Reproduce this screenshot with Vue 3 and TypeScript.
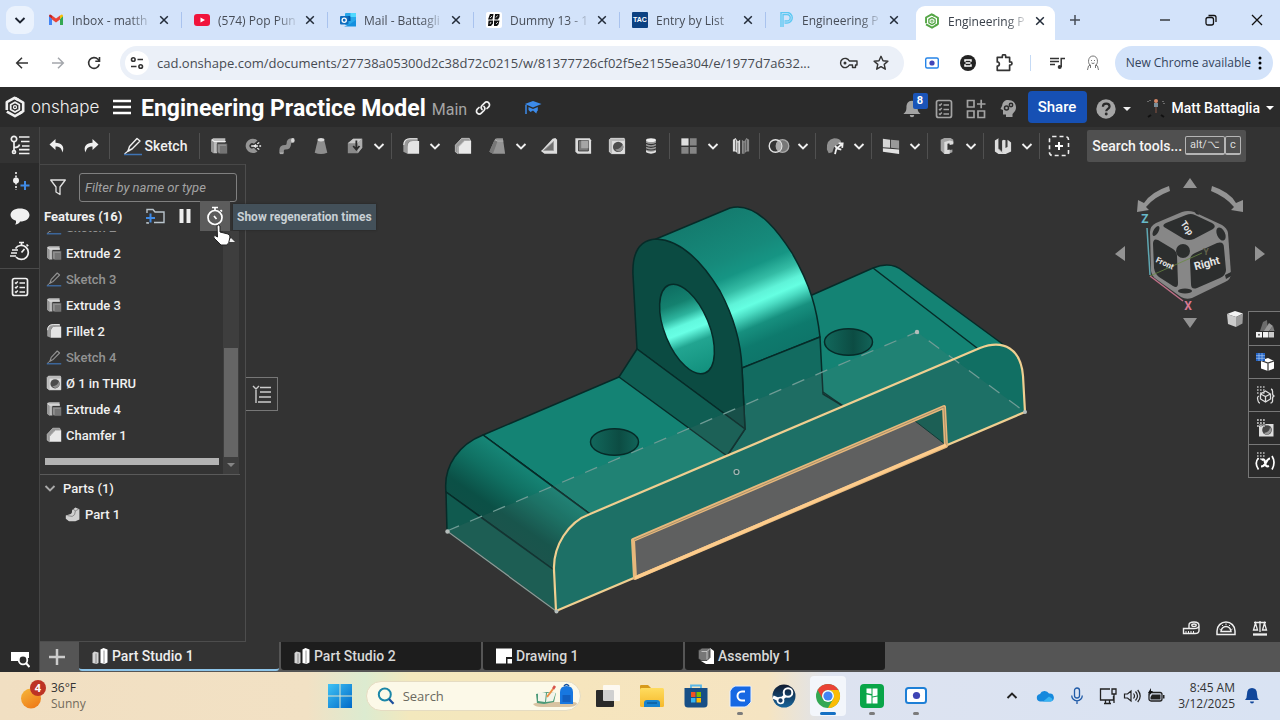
<script setup lang="ts">
import { ref } from 'vue'

interface BrowserTab { title: string; icon: string; active?: boolean }
interface Tool { kind: 'tool' | 'menu' | 'sep'; icon?: string; label?: string }
interface Feature { name: string; icon: string; dim?: boolean }

const browserTabs: BrowserTab[] = [
  { title: 'Inbox - matth', icon: 'gmail' },
  { title: '(574) Pop Pun', icon: 'youtube' },
  { title: 'Mail - Battagli', icon: 'outlook' },
  { title: 'Dummy 13 - 1', icon: 'dummy' },
  { title: 'Entry by List', icon: 'tac' },
  { title: 'Engineering P', icon: 'pearson' },
  { title: 'Engineering P', icon: 'onshape-green', active: true },
]

const t = (icon: string, label: string): Tool => ({ kind: 'tool', icon, label })
const menu = (label: string): Tool => ({ kind: 'menu', label })
const sep: Tool = { kind: 'sep' }
const tools: Tool[] = [
  t('extrude', 'Extrude'), t('revolve', 'Revolve'), t('sweep', 'Sweep'), t('loft', 'Loft'), t('thicken', 'Thicken'), menu('More solids'), sep,
  t('fillet', 'Fillet'), menu('More fillets'), t('chamfer', 'Chamfer'), t('draft', 'Draft'), menu('More drafts'),
  t('rib', 'Rib'), t('shell', 'Shell'), t('hole', 'Hole'), t('thread', 'Thread'), sep,
  t('pattern', 'Pattern'), menu('More patterns'), t('mirror', 'Mirror'), sep,
  t('boolean', 'Boolean'), menu('More booleans'), sep,
  t('transform', 'Transform'), menu('More transforms'), sep,
  t('plane', 'Plane'), menu('More planes'), sep,
  t('frame', 'Frame'), menu('More frames'), sep,
  t('sheet', 'Sheet metal'), menu('More sheet metal'), sep,
  t('addtool', 'Add custom feature'),
]

const features: Feature[] = [
  { name: 'Sketch 2', icon: 'sketch', dim: true },
  { name: 'Extrude 2', icon: 'extrude' },
  { name: 'Sketch 3', icon: 'sketch', dim: true },
  { name: 'Extrude 3', icon: 'extrude' },
  { name: 'Fillet 2', icon: 'fillet' },
  { name: 'Sketch 4', icon: 'sketch', dim: true },
  { name: 'Ø 1 in THRU', icon: 'hole' },
  { name: 'Extrude 4', icon: 'extrude' },
  { name: 'Chamfer 1', icon: 'chamfer' },
]

const docTabs = [
  { name: 'Part Studio 1', icon: 'studio' },
  { name: 'Part Studio 2', icon: 'studio' },
  { name: 'Drawing 1', icon: 'drawing' },
  { name: 'Assembly 1', icon: 'assembly' },
]
const activeDoc = ref(0)

const sidePanels = [
  { icon: 'appearance', label: 'Appearance' },
  { icon: 'gridcube', label: 'Configurations' },
  { icon: 'bracecube', label: 'Custom tables' },
  { icon: 'gridhole', label: 'Hole table' },
  { icon: 'variable', label: 'Variables' },
]

const apps = [
  { icon: 'taskview', label: 'Task view' },
  { icon: 'explorer', label: 'File Explorer' },
  { icon: 'store', label: 'Store' },
  { icon: 'capp', label: 'C app', running: true },
  { icon: 'steam', label: 'Steam' },
  { icon: 'chrome', label: 'Chrome', active: true },
  { icon: 'greenapp', label: 'Panels', running: true },
  { icon: 'recorder', label: 'Recorder', running: true },
]

const url = ref('cad.onshape.com/documents/27738a05300d2c38d72c0215/w/81377726cf02f5e2155ea304/e/1977d7a632...')
const filter = ref('')
const query = ref('')
</script>

<template>
  <div class="screen">
    <svg class="defs" aria-hidden="true">
      <defs>
        <linearGradient id="g-sun" x1="0" y1="0" x2="0.6" y2="1"><stop offset="0" stop-color="#f6b93b" /><stop offset="1" stop-color="#ef7d1a" /></linearGradient>
        <linearGradient id="g-win" x1="0" y1="0" x2="1" y2="1"><stop offset="0" stop-color="#3fc3f5" /><stop offset="1" stop-color="#0069c8" /></linearGradient>
        <linearGradient id="g-folder" x1="0" y1="0" x2="0" y2="1"><stop offset="0" stop-color="#ffdc5f" /><stop offset="1" stop-color="#f5b92c" /></linearGradient>
        <linearGradient id="g-steam" x1="0" y1="0" x2="0" y2="1"><stop offset="0" stop-color="#111b30" /><stop offset="1" stop-color="#16649b" /></linearGradient>
      </defs>
      <symbol id="chev" viewBox="0 0 12 12"><path d="M1.500 4 6 8.500 10.500 4" fill="none" stroke="currentColor" stroke-width="1.900" /></symbol>
      <symbol id="x" viewBox="0 0 12 12"><path d="M2.200 2.200l7.600 7.600M9.800 2.200l-7.600 7.600" fill="none" stroke="currentColor" stroke-width="1.500" /></symbol>
      <symbol id="gmail" viewBox="0 0 16 16"><path d="M1 3.500V13h3V7z" fill="#4285f4" /><path d="M12 7v6h3V3.500z" fill="#34a853" /><path d="M1 4.200 4 7V3.600L2.800 2.700Q1 2 1 4.200" fill="#c5221f" /><path d="M4 3.600 8 6.600l4-3V7.500l-4 3-4-3z" fill="#ea4335" /><path d="M12 3.600 13.200 2.700Q15 2 15 4.200L12 7z" fill="#fbbc04" /></symbol>
      <symbol id="youtube" viewBox="0 0 16 16"><rect y="2" width="16" height="12" rx="3" fill="#f0143c" /><path d="m6.500 5.400 4.500 2.600-4.500 2.600z" fill="#fff" /></symbol>
      <symbol id="outlook" viewBox="0 0 16 16"><rect x="5" y="1" width="11" height="12" rx="1" fill="#28a8ea" /><path d="M5 4h5.500v5H5z" fill="#0358a7" /><path d="M10.500 1H16v4h-5.500z" fill="#50d9ff" /><path d="M4 14.500h12V8l-6 4z" fill="#1490df" /><rect y="4" width="8.500" height="8.500" rx="1" fill="#0f6cbd" /><circle cx="4.200" cy="8.200" r="2.100" fill="none" stroke="#fff" stroke-width="1.300" /></symbol>
      <symbol id="dummy" viewBox="0 0 16 16"><rect width="16" height="16" rx="2" fill="#fff" /><path d="M4 2h3.500L6.500 7.500H2zM9 2h4.500v3L12 7.500H8.500zM2.500 8.500h4.500v3L5 14H2zM8 8.500h5.500l-1 4L11 14H8z" fill="#111" /><path d="M6 4 4 6M11.500 3.500l-1.500 2M5 10l-1 2M12 10l-2 2" stroke="#fff" stroke-width=".8" /></symbol>
      <symbol id="pearson" viewBox="0 0 16 16"><path d="M4 15V1.500h5a4.200 4.200 0 0 1 0 8.500H6.500" fill="none" stroke="#5cc8f2" stroke-width="3.400" /><path d="M4 15V1.500h5a4.200 4.200 0 0 1 0 8.500H6.500" fill="none" stroke="#d3e3fa" stroke-width=".7" /></symbol>
      <symbol id="onshape-mark" viewBox="0 0 20 22"><g fill="none" stroke="currentColor" stroke-width="2.600" stroke-linejoin="round"><path d="M1.800 14V6.200L9.500 1.800l4 2.200" /><path d="M10 2l8.200 4.600v8.600l-3.700 2.200" /><path d="M17 16.200 10 20.200 1.800 15.600" /><path d="M10 6.300l4.300 2.400v4.800L10 16l-4.300-2.500V8.700z" stroke-width="1.800" /><circle cx="10" cy="11.200" r="1.500" stroke-width="1.300" /></g></symbol>
      <symbol id="back" viewBox="0 0 16 16"><path d="M14 8H3M8 2.700 2.700 8 8 13.300" fill="none" stroke="currentColor" stroke-width="1.500" /></symbol>
      <symbol id="forward" viewBox="0 0 16 16"><path d="M2 8h11M8 2.700 13.300 8 8 13.300" fill="none" stroke="currentColor" stroke-width="1.500" /></symbol>
      <symbol id="reload" viewBox="0 0 16 16"><path d="M13.300 9.300A5.400 5.400 0 1 1 12 4.300l1.300 1.300M13.500 2v4.200H9.300" fill="none" stroke="currentColor" stroke-width="1.600" /></symbol>
      <symbol id="tune" viewBox="0 0 16 16"><g fill="none" stroke="currentColor" stroke-width="1.600"><circle cx="4.300" cy="4.500" r="1.800" /><path d="M8.500 4.500H14M2 11.500h5.500" /><circle cx="11.700" cy="11.500" r="1.800" /></g></symbol>
      <symbol id="key" viewBox="0 0 20 16"><g fill="none" stroke="currentColor" stroke-width="1.400"><path d="M10.300 6H18v4h-1.500v2.500h-3V10h-3.200A4.600 4.600 0 1 1 10.300 6z" stroke-linejoin="round" /></g><circle cx="6" cy="8" r="1.500" fill="currentColor" /></symbol>
      <symbol id="star" viewBox="0 0 16 16"><path d="M8 1.300l2 4.500 4.900.4-3.700 3.200 1.100 4.800L8 11.600l-4.300 2.600 1.100-4.800L1.100 6.200 6 5.800z" fill="none" stroke="currentColor" stroke-width="1.400" stroke-linejoin="round" /></symbol>
      <symbol id="recorder-small" viewBox="0 0 16 16"><rect x="1.700" y="3" width="12.600" height="10" rx="1.500" fill="#fff" stroke="#2684e8" stroke-width="1.400" /><circle cx="8" cy="8" r="2.600" fill="#4146b8" /></symbol>
      <symbol id="blackext" viewBox="0 0 16 16"><circle cx="8" cy="8" r="8" fill="#222" /><path d="M5 6.700V5h6v1.700M5 9.300V11h6V9.300M5.500 8h5" fill="none" stroke="#fff" stroke-width="1.500" /></symbol>
      <symbol id="puzzle" viewBox="0 0 16 16"><path d="M2 3h4.500V2a1.500 1.500 0 0 1 3 0v1H13v4h.700a1.400 1.400 0 0 1 0 2.800H13V14.500H2v-3.700c2.500 0 2.500-3.800 0-3.800z" fill="none" stroke="currentColor" stroke-width="1.500" stroke-linejoin="round" /></symbol>
      <symbol id="playlist" viewBox="0 0 16 16"><path d="M1 3.500h9M1 6.500h9M1 9.500h5" stroke="currentColor" stroke-width="1.500" /><path d="M12.200 12V3.500H16" fill="none" stroke="currentColor" stroke-width="1.500" /><circle cx="10.700" cy="12" r="2" fill="currentColor" /></symbol>
      <symbol id="ghost" viewBox="0 0 16 18"><g fill="none" stroke="#777" stroke-width="1"><path d="M5 11C2.500 9 3 2 8 2s5.500 7 3 9M2.500 16l1-4 2-1v3M13.500 16l-1-4-2-1v3" /><path d="M6 6.500h1M9 6.500h1M6.500 9q1.500 1 3 0" /></g></symbol>
      <symbol id="link" viewBox="0 0 16 16"><g fill="none" stroke="currentColor" stroke-width="1.700" stroke-linecap="round"><path d="M7 9.500a3 3 0 0 1 0-4l2.700-2.700a2.700 2.700 0 0 1 4 4L12 8.500" /><path d="M9 6.500a3 3 0 0 1 0 4l-2.700 2.700a2.700 2.700 0 0 1-4-4L4 7.500" /></g></symbol>
      <symbol id="gradcap" viewBox="0 0 18 18"><path d="M9 2l8.500 3L9 8.500.8 5z" fill="#3c8bea" /><path d="M4.500 8 9 10l4.800-2v3.500q-1 .5-1.500 3L9 11.500 6.500 13 4.500 11z" fill="#3c8bea" /><path d="M2 6v9" stroke="#3c8bea" stroke-width="1.500" /></symbol>
      <symbol id="bell" viewBox="0 0 18 18"><path d="M9 1.500c3.700 0 5 2.800 5 6 0 3.500 1 4.500 2.700 6H1.300C3 12 4 11 4 7.500c0-3.200 1.300-6 5-6M7 14.500h4a2 2 0 0 1-4 0" fill="currentColor" /></symbol>
      <symbol id="checklist" viewBox="0 0 18 20"><rect x="1.500" y="1.500" width="15" height="17" rx="2" fill="none" stroke="currentColor" stroke-width="1.700" /><path d="M4 5.500l1 1 1.800-2M4 10l1 1 1.800-2M4 14.500l1 1 1.800-2M8.500 6H14M8.500 10.500H14M8.500 15H14" fill="none" stroke="currentColor" stroke-width="1.400" /></symbol>
      <symbol id="appgrid" viewBox="0 0 20 20"><path d="M1.500 1.500h6.500v6.500h-6.500zM1.500 12h6.500v6.500h-6.500zM12 12h6.500v6.500h-6.500zM15.200.7v8.500M11 5h8.500" fill="none" stroke="currentColor" stroke-width="1.700" /></symbol>
      <symbol id="head" viewBox="0 0 18 20"><path d="M9 1c5 0 8 3 8 7.500 0 4-3 5-3.500 7V18H7v-2.500H4V11L1.500 10 3.200 6.500C3.500 3 6 1 9 1" fill="currentColor" /><g fill="none" stroke="#2b2b2b" stroke-width="1.500"><circle cx="7.500" cy="9" r="2" /><circle cx="12" cy="6" r="1.700" /></g></symbol>
      <symbol id="question" viewBox="0 0 18 18"><circle cx="9" cy="9" r="8.700" fill="#a5a5a5" /><path d="M6.200 7c0-4 6-3.700 6-.3 0 2-3 2.200-3 4.300" fill="none" stroke="#2b2b2b" stroke-width="2" /><circle cx="9.200" cy="13.500" r="1.300" fill="#2b2b2b" /></symbol>
      <symbol id="caret" viewBox="0 0 8 6"><path d="M0 1h8L4 5z" fill="currentColor" /></symbol>
      <symbol id="avatar" viewBox="0 0 20 20"><path d="M2 3v1M4 2v1M17 3v1M18 5v1" stroke="#aaa" stroke-width="1" /><circle cx="10" cy="3" r="2" fill="#d98a68" /><path d="M8 5h4v4H8z" fill="#7b8e9a" /><path d="M9 9h2v6H9z" fill="#5a4038" /><path d="M2 19l3-2M15 17l3 2" stroke="#111" stroke-width="2" /></symbol>
      <symbol id="undo" viewBox="0 0 18 16"><path d="M7.500 1 1.500 6.500l6 5.500V8.500c4 0 6 1.500 7 6 2.500-6-1-9.500-7-9.700z" fill="currentColor" /></symbol>
      <symbol id="redo" viewBox="0 0 18 16"><path d="M10.500 1l6 5.500-6 5.500V8.500c-4 0-6 1.500-7 6-2.500-6 1-9.500 7-9.700z" fill="currentColor" /></symbol>
      <symbol id="sketch" viewBox="0 0 20 20"><path d="M5 15l1.500-4.500L14 2.500l3 2.500-8 8z" fill="none" stroke="currentColor" stroke-width="1.400" stroke-linejoin="round" /><path d="M1.500 18 5 15l2-.5" fill="none" stroke="currentColor" stroke-width="1.200" /><path d="M1 18.500h18" stroke="#3f74b5" stroke-width="1.500" /></symbol>
      <symbol id="extrude" viewBox="0 0 20 20"><path d="M1.500 3 3.500 1.500H17V6H8v12H4l-2.500-2z" fill="#bdbdbd" /><path d="M1.500 3 4.500 5v13l-3-2z" fill="#959595" /><path d="M2 3 4.500 5H17.500" fill="none" stroke="#f0f0f0" stroke-width="1.200" /><path d="M8 7.500h11V18.500H10l-2-2z" fill="#8e8e8e" stroke="#444" stroke-width=".8" /><path d="M11 10H18.500v8H11z" fill="#747474" /></symbol>
      <symbol id="revolve" viewBox="0 0 20 20"><path d="M13 2.500A8 8 0 1 0 15 16l-4-4a3 3 0 1 1 0-4.500l4-3.500z" fill="#959595" /><path d="M8 10h11M11 10l6-4M11 10l6 4" stroke="#eee" stroke-width="1.400" stroke-dasharray="3 1.500" /></symbol>
      <symbol id="sweep" viewBox="0 0 20 20"><path d="M4 18v-3q0-3.500 4-3.500t4-4Q12 4 16 4" fill="none" stroke="#8c8c8c" stroke-width="5" /><ellipse cx="16.500" cy="3.800" rx="2" ry="2.600" fill="#d7d7d7" /><path d="M2 18h4" stroke="#aaa" stroke-width="2" /></symbol>
      <symbol id="loft" viewBox="0 0 20 20"><path d="M6.500 3h7l3.500 14.500q-7 3-14 0z" fill="#8e8e8e" /><ellipse cx="10" cy="3" rx="3.800" ry="1.900" fill="#d9d9d9" /></symbol>
      <symbol id="thicken" viewBox="0 0 20 20"><path d="M2 7l6-5h10v10l-5 6H2z" fill="#8a8a8a" /><path d="M2 7l6-5h10l-5 5z" fill="#c8c8c8" /><path d="M13 7l5-5v10l-5 6z" fill="#adadad" /><path d="M11.500 4v9M8 10l3.500 4 3.500-4" fill="none" stroke="#2a2a2a" stroke-width="2" /></symbol>
      <symbol id="fillet" viewBox="0 0 20 20"><path d="M1.500 9q0-7.500 7.500-7.500h8.500v3H11Q6 5 6 10v8.500l-4.500-2z" fill="#999" /><path d="M2 9q0-7 7-7H17" fill="none" stroke="#eee" stroke-width="1.200" /><path d="M6 11q0-6.500 6-6.500h7v14H6z" fill="#e4e4e4" /></symbol>
      <symbol id="chamfer" viewBox="0 0 20 20"><path d="M1.500 9 8.500 1.500H17l1.500 3H11L4.500 11v7.500l-3-2z" fill="#999" stroke="#ddd" stroke-width=".7" /><path d="M5 11l6.500-6.500H19v14H5z" fill="#e9e9e9" /></symbol>
      <symbol id="draft" viewBox="0 0 20 20"><path d="M7 4q1-2.500 3-2.500h6.500L19 18.500H5.500l-4-2z" fill="#949494" /><path d="M7 4 1.500 16.500l4 2L10.500 5z" fill="#777" /><path d="M8 3l2.500 1.500H17" fill="none" stroke="#b5b5b5" stroke-width="1" /></symbol>
      <symbol id="rib" viewBox="0 0 20 20"><path d="M14 2l3-1 2 2v15.500H5L1 15.500 3 14z" fill="#ddd" /><path d="M4 15 15 5v10z" fill="#707070" stroke="#999" stroke-width="1" /></symbol>
      <symbol id="shell" viewBox="0 0 20 20"><path d="M1.500 1.500h16l1.500 2v15H4l-2.500-2z" fill="#dcdcdc" /><path d="M5 4h11v11.500H5z" fill="#777" stroke="#3c3c3c" stroke-width="1" /><path d="M8 4h8v8.500H8z" fill="#a5a5a5" /></symbol>
      <symbol id="hole" viewBox="0 0 20 20"><path d="M1.500 3 3 1.500h15L18.500 3v15.500H4l-2.500-2z" fill="#b9b9b9" stroke="#eee" stroke-width=".8" /><path d="M4.500 4.500h14v14h-14z" fill="#dedede" /><circle cx="11.300" cy="11" r="5.800" fill="#4c4c4c" /><path d="M8 14a5 5 0 0 0 8-6q-1 5-8 6" fill="#8f8f8f" /></symbol>
      <symbol id="thread" viewBox="0 0 20 20"><path d="M4.500 3.500v13q5.500 3 11 0v-13z" fill="#9a9a9a" /><ellipse cx="10" cy="3.500" rx="5.500" ry="2" fill="#eee" /><path d="M4 7q6 3 12 0M4 10q6 3 12 0M4 13q6 3 12 0" fill="none" stroke="#333" stroke-width="1.200" /><path d="M4.500 15q5.500 3 11 0v2q-5.500 3-11 0z" fill="#e2e2e2" /></symbol>
      <symbol id="pattern" viewBox="0 0 20 20"><path d="M1.500 1.500h8v8h-8z" fill="#e0e0e0" /><path d="M11 1.500h7.500v8H11zM1.500 11h8v7.500h-8zM11 11h7.500v7.500H11z" fill="#858585" /></symbol>
      <symbol id="mirror" viewBox="0 0 20 20"><path d="M1 3l3-2 2.500 4L9 3v15.500H6.500L4 16H1z" fill="#dedede" /><path d="M19 3l-3-2-2.500 4L11 3v15.500h2.500L16 16h3z" fill="#8b8b8b" /><path d="M4 3v12M6.500 6v12M16 3v12M13.500 6v12" stroke="#444" stroke-width=".8" /></symbol>
      <symbol id="boolean" viewBox="0 0 22 20"><circle cx="14.500" cy="10" r="6.300" fill="#777" stroke="#aaa" stroke-width="1.300" /><circle cx="7.500" cy="10" r="6.300" fill="none" stroke="#e2e2e2" stroke-width="1.400" /><path d="M11 5a6.300 6.300 0 0 1 0 10 6.300 6.300 0 0 1 0-10" fill="#aaa" /></symbol>
      <symbol id="transform" viewBox="0 0 20 20"><path d="M1 14Q0 3 9 1.500q7 0 8 4.500L9 11l-2 6-4 1z" fill="#8f8f8f" /><path d="M10 19l1.500-6 6-5M10 10l3 3 4 1M14 7l4.500 0L18 12" fill="none" stroke="#f0f0f0" stroke-width="2" /></symbol>
      <symbol id="plane" viewBox="0 0 20 20"><path d="M1 2l8 1v9l-8-.5z" fill="#d5d5d5" /><path d="M10 3l9 1v9l-9-1z" fill="#999" /><path d="M1 12.500l18 1.500v5L1 16.500z" fill="#e2e2e2" /></symbol>
      <symbol id="frame" viewBox="0 0 20 20"><path d="M3 3l4-2h7l3 2v4l-4 1-1-2-2 1v8l6-1v3l-5 2H7l-4-4z" fill="#a5a5a5" /><path d="M7 5.500 13 4l4 1v3l-4 1v-2l-2.500.5v7l2.500-.5v4.500L7 19z" fill="#dcdcdc" /></symbol>
      <symbol id="sheet" viewBox="0 0 20 20"><path d="M1 4l4-2.500v11L9 16V4l2-1 2 1v8l2-1V3l4 3v10l-6 3H5l-4-3z" fill="#dcdcdc" /><path d="M5 2v11l4 4M13 4v8" fill="none" stroke="#777" stroke-width="1" /></symbol>
      <symbol id="addtool" viewBox="0 0 22 22"><rect x="1.500" y="1.500" width="19" height="19" rx="3" fill="none" stroke="#eee" stroke-width="1.600" stroke-dasharray="4 3" /><path d="M11 7v8M7 11h8" stroke="#fff" stroke-width="2" /></symbol>
      <symbol id="tree" viewBox="0 0 20 20"><g fill="none" stroke="currentColor" stroke-width="1.700"><circle cx="4" cy="4" r="2.700" /><path d="M4 7v9.500M4 12.500q5 0 5.500-3" /><circle cx="4" cy="17" r="1.500" /><path d="M9 2h10.500M11 6.500h8.500M12 11h7.500M9 14.700h10.500M9 18.500h10.500" /></g></symbol>
      <symbol id="addnode" viewBox="0 0 20 20"><path d="M6 1v18" stroke="currentColor" stroke-width="1.600" stroke-dasharray="2 1.500" /><circle cx="6" cy="9.500" r="3" fill="currentColor" /><path d="M15 10v9M10.500 14.500h9" stroke="#3f8ae5" stroke-width="2" /></symbol>
      <symbol id="comment" viewBox="0 0 20 20"><path d="M10 2.500c5.500 0 9.500 2.700 9.500 6.500s-4 6.500-9.500 6.500q-1 2.500-5 3 1.500-1.500 1-3.700C2.500 13.700.5 11.500.5 9 .5 5.200 4.500 2.500 10 2.500" fill="currentColor" /></symbol>
      <symbol id="speed" viewBox="0 0 20 20"><g fill="none" stroke="currentColor" stroke-width="1.700"><path d="M5.500 7.500A7 7 0 1 1 6 16M9 1.500h5M11.500 2v3M16.500 3.500l1.700 1.700M11.500 11.500l3-3.500M2 9h6M1 12h6M0 15h6" /></g></symbol>
      <symbol id="stopwatch" viewBox="0 0 20 20"><g fill="none" stroke="#fff" stroke-width="1.700"><circle cx="10" cy="11.500" r="7" /><path d="M7 1.500h6M10 2v3M15.500 4l1.500 1.500M9 10l2.500 3" /></g></symbol>
      <symbol id="tabsearch" viewBox="0 0 20 20"><path d="M1 3h18v6h-2a5 5 0 0 0-9 3L1 12z" fill="#fff" /><circle cx="13" cy="11" r="4.300" fill="#2b2b2b" stroke="#fff" stroke-width="1.800" /><path d="M16 14l3.500 4" stroke="#fff" stroke-width="2" /></symbol>
      <symbol id="funnel" viewBox="0 0 18 18"><path d="M1.700 2h14.600L11 9v7.500L7 14V9z" fill="none" stroke="#e2e2e2" stroke-width="1.300" stroke-linejoin="round" /></symbol>
      <symbol id="addfolder" viewBox="0 0 20 18"><path d="M2 6V2.500h6L10 5h9v10.500H9M2 15v1h2" fill="none" stroke="#b9c4cc" stroke-width="1.400" /><path d="M5.500 6.500v9M1 11h9" stroke="#3f8ae5" stroke-width="2" /></symbol>
      <symbol id="part" viewBox="0 0 20 20"><path d="M1 12l6-2q2-1 2-5l4-3 5 2v13l-5 2H5l-4-3z" fill="#cfcfcf" /><path d="M10 4l3 2q0 6-4 7l-6-1M13 6l4-2" fill="none" stroke="#777" stroke-width="1" /></symbol>
      <symbol id="listtoggle" viewBox="0 0 20 20"><path d="M1 2l3 3 3-3M4 6v13M8 3.500h11M8 8h11M7 13h12M6 18h13" fill="none" stroke="#ccc" stroke-width="1.400" /></symbol>
      <symbol id="studio" viewBox="0 0 18 18"><path d="M1.500 6l2-1.500 4 1V16l-2 1-4-1z" fill="#d5d5d5" /><path d="M9.500 2.500l3-1.500 4 1.500v13l-3 1.500-4-1z" fill="#fff" /><path d="M5 6.500v10M13 3.500v13" stroke="#777" stroke-width=".8" /></symbol>
      <symbol id="drawing" viewBox="0 0 18 18"><path d="M1 1.500h16v8.500h-6v6.500H1z" fill="#fff" /><path d="M12.500 12H17v4.500h-4.500z" fill="#fff" /></symbol>
      <symbol id="assembly" viewBox="0 0 18 18"><path d="M5 1h8l4 3v13H9l-5-3z" fill="#fff" /><path d="M1.500 3.500l3-2H13v9l-3 3H4l-2.500-2z" fill="#777" stroke="#333" stroke-width=".8" /><path d="M4.500 4.500H10v8M10 4.500l3-3" fill="none" stroke="#ddd" stroke-width=".7" /></symbol>
      <symbol id="appearance" viewBox="0 0 20 20"><path d="M5 12l3-9 4-2 1 11z" fill="#6c6c6c" /><path d="M9 12l5-8 4 3-4 5z" fill="#999" /><path d="M14 12l4-5 1.500 5z" fill="#7d7d7d" /><path d="M1 13h6v5.500H1zM8 13h5v5.500H8z" fill="#f2f2f2" /><path d="M13.500 13H19v5.500h-5.500z" fill="#ccc" /><circle cx="4" cy="15.700" r="1" fill="#555" /></symbol>
      <symbol id="gridcube" viewBox="0 0 20 20"><path d="M6 8.500l7-2.500 6 3v7.500L13 19l-7-2.500z" fill="#fff" /><path d="M6 8.500l7 2.500 6-2M13 11v8" fill="none" stroke="#333" stroke-width="1.200" /><path d="M1 1h9v8H1z" fill="#2363c4" /><path d="M4 1v8M7 1v8M1 3.700h9M1 6.300h9" stroke="#a7c5f0" stroke-width=".7" /></symbol>
      <symbol id="bracecube" viewBox="0 0 20 20"><path d="M2 2h8M2 5h8M2 8h8" stroke="#bbb" stroke-width="1.600" stroke-dasharray="1.600 1.400" /><path d="M5.500 9l5-3 5 3v5l-5 3-5-3zM5.500 9l5 2.500 5-2.500M10.500 11.500V17M4 11q-1.500.5-1.500 2 .5 5 2.500 5M16 4q2 .5 1.500 4 0 3 2 3-2 0-2 3 .500 4-2 4" fill="none" stroke="#ddd" stroke-width="1.300" /></symbol>
      <symbol id="gridhole" viewBox="0 0 20 20"><path d="M4 6h14.500v12.500H4z" fill="#ddd" /><circle cx="12" cy="12" r="4.800" fill="#444" /><path d="M9 15q6-1 6-6 3 4-1 7-3 1.500-5-1" fill="#999" /><path d="M1.500 1h9v7h-9z" fill="#2b2b2b" fill-opacity=".6" /><path d="M2 2h8M2 5h8M2 8h8" stroke="#aaa" stroke-width="1.800" stroke-dasharray="1.800 1.200" /></symbol>
      <symbol id="variable" viewBox="0 0 20 20"><path d="M2 2h8M2 5h8M2 8h6" stroke="#bbb" stroke-width="1.600" stroke-dasharray="1.600 1.400" /><path d="M3.500 7Q-1 12 3.500 18.500M17 5q4 6.500 0 13.500" fill="none" stroke="#fff" stroke-width="1.700" /><path d="M6.500 9q3-2 3.500 2.500.5 5 4 3.500M15 7.500q-2 0-4 4t-5 4" fill="none" stroke="#fff" stroke-width="2.200" /></symbol>
      <symbol id="cube" viewBox="0 0 16 16"><path d="M0 3l8-3 8 2.500-7 3.500z" fill="#f4f4f4" /><path d="M0 3l9 3v10L1 13z" fill="#ccc" /><path d="M9 6l7-3.500-.500 10L9 16z" fill="#9c9c9c" /></symbol>
      <symbol id="tape" viewBox="0 0 18 16"><g fill="none" stroke="#eee" stroke-width="1.400"><path d="M1.500 8.500H12q5 0 5-3v5q0 3-4 3H1.500zM7 8V5q0-3 5-3t5 3.500" /><ellipse cx="12" cy="5.200" rx="2.200" ry="1.200" /><path d="M4 11v2M6.500 11v2M9 11v2M11.500 11v2" stroke-width="1" /></g></symbol>
      <symbol id="protractor" viewBox="0 0 20 16"><g fill="none" stroke="#eee" stroke-width="1.500"><path d="M1 14.500V11a9 9 0 0 1 18 0v3.500z" /><path d="M5 11.500a5 5 0 0 1 10 0z" /><path d="M3.500 9l1 .5M6 5l1 1M10 3.500V5M14 5l-1 1M16.500 9l-1 .5" stroke-width="1" /></g></symbol>
      <symbol id="scales" viewBox="0 0 16 16"><g fill="none" stroke="#eee" stroke-width="1.300"><path d="M2 2.500h12M8 1v11M3.500 3l-2 7h4zM12.500 3l-2 7h4z" /><path d="M1 14.500h14" stroke-width="2.300" /></g></symbol>
      <symbol id="weather" viewBox="0 0 26 28"><circle cx="12" cy="17.500" r="10" fill="url(#g-sun)" /></symbol>
      <symbol id="windows" viewBox="0 0 24 24"><path d="M0 0h11.500v11.500H0zM12.500 0H24v11.500H12.500zM0 12.500h11.500V24H0zM12.500 12.500H24V24H12.500z" fill="url(#g-win)" /></symbol>
      <symbol id="searchring" viewBox="0 0 18 18"><circle cx="7.800" cy="7.500" r="6" fill="none" stroke="#1b87a8" stroke-width="2" /><path d="M12 12l4.500 4.800" stroke="#1c4f9c" stroke-width="2.200" /></symbol>
      <symbol id="school" viewBox="0 0 46 26"><path d="M1 21q3-2 12-2h28q4 0 4 2-2 3-8 3H9q-6 0-8-3" fill="#d8c3a2" /><path d="M4 11l11-2 9 1-2 9-10 2-7-1z" fill="#4b9a78" /><path d="M6 9l8 1-1 9-7-1zM15 10l9-1-3 9-7 1z" fill="#f3f5ea" /><path d="M15 14 21 6" stroke="#ed9145" stroke-width="2" /><path d="M21 6l2-3" stroke="#d6534a" stroke-width="2.500" /><path d="M28 9q0-6 6.500-6T41 9v12H28z" fill="#1777e0" /><path d="M30.500 12h8v7h-8z" fill="#125fc0" /><path d="M32 3q2.500-3 5 0" fill="none" stroke="#124f9e" stroke-width="1.500" /></symbol>
      <symbol id="taskview" viewBox="0 0 26 26"><rect x="1" y="7" width="18" height="17" rx="1" fill="#2a2a2a" /><rect x="8" y="2" width="17" height="16" rx="1" fill="#fff" opacity=".78" /></symbol>
      <symbol id="explorer" viewBox="0 0 26 26"><path d="M1 3q0-1 1-1h7l3 3v6H1z" fill="#d79a1c" /><rect x="1" y="5" width="24" height="19" rx="1.500" fill="url(#g-folder)" /><path d="M5 24v-4q0-3 3-3h10q3 0 3 3v4z" fill="#1783cf" /><path d="M8 20h10" stroke="#0c5c9e" stroke-width="1.500" /></symbol>
      <symbol id="store" viewBox="0 0 26 26"><path d="M8 5V2.500h10V5" fill="none" stroke="#59b7e8" stroke-width="1.800" /><path d="M1.500 5h23v16q0 3.500-3.500 3.500H5Q1.500 24.500 1.500 21z" fill="#174f86" /><path d="M8 9h4.500v5H8z" fill="#f25022" /><path d="M13.500 9H18v5h-4.500z" fill="#7fba00" /><path d="M8 15h4.500v4.500H8z" fill="#35b5f0" /><path d="M13.500 15H18v4.500h-4.500z" fill="#ffb900" /></symbol>
      <symbol id="capp" viewBox="0 0 26 26"><path d="M8 3h15q1 0 1 1v15q-4 5-6 5H4q-1 0-1-1V8q2-4 5-5" fill="#1668e3" stroke="#e8f1ff" stroke-width="1" /><path d="M18 8.500h-3a4.500 4.500 0 0 0 0 9h3" fill="none" stroke="#fff" stroke-width="2" /></symbol>
      <symbol id="steam" viewBox="0 0 26 26"><circle cx="13" cy="13" r="11.500" fill="url(#g-steam)" /><circle cx="17" cy="9.500" r="4.300" fill="none" stroke="#fff" stroke-width="2" /><path d="M2 14l7 3 5-4" fill="none" stroke="#fff" stroke-width="3.500" /><circle cx="9.500" cy="17.500" r="3" fill="#1a3c63" stroke="#fff" stroke-width="1.700" /></symbol>
      <symbol id="chrome" viewBox="0 0 26 26"><circle cx="13" cy="13" r="12" fill="#34a853" /><path d="M13 1a12 12 0 0 1 10.400 6H13a6 6 0 0 0-5.200 9L2.600 7A12 12 0 0 1 13 1" fill="#ea4335" /><path d="M23.400 7A12 12 0 0 1 13 25l5.200-9A6 6 0 0 0 13 7z" fill="#fbbc04" /><circle cx="13" cy="13" r="6" fill="#fff" /><circle cx="13" cy="13" r="4.600" fill="#4285f4" /></symbol>
      <symbol id="greenapp" viewBox="0 0 26 26"><rect x="1" y="1" width="24" height="24" rx="4" fill="#09a548" /><path d="M7.500 5.500h5v5.500l-5-1zM7.500 11.500l5 1v8h-5zM13.500 5.500h5v7l-5 1zM13.500 14.500l5-1v7h-5z" fill="#fff" /></symbol>
      <symbol id="recorder" viewBox="0 0 26 26"><rect x="3" y="5" width="20" height="15" rx="2.500" fill="#fff" stroke="#1d7fd6" stroke-width="2" /><circle cx="13.500" cy="12.500" r="3.600" fill="#3e44b5" /></symbol>
      <symbol id="cloud" viewBox="0 0 18 14"><path d="M4 12.500A3.800 3.800 0 0 1 4 5a5 5 0 0 1 9-.5 4 4 0 0 1 1.500 8z" fill="#1689dd" /><path d="M7 12.500l6-5 3 2q1.500 2.500-1.500 3z" fill="#39b4f2" /></symbol>
      <symbol id="mic" viewBox="0 0 14 18"><rect x="4.500" y="1" width="5" height="10" rx="2.500" fill="none" stroke="#205ba8" stroke-width="1.300" /><path d="M1.700 8.500a5.300 5.300 0 0 0 10.600 0M7 14v3" fill="none" stroke="#205ba8" stroke-width="1.300" /></symbol>
      <symbol id="monitor" viewBox="0 0 18 18"><path d="M11 2H1.500v11h13V9M5 16.500h7M6.500 13v3M10.500 13v3M13 2h4v5h-4zM15 7v9" fill="none" stroke="#222" stroke-width="1.300" /></symbol>
      <symbol id="volume" viewBox="0 0 18 16"><path d="M1.500 6h3L8 3v10l-3.500-3h-3zM10.500 5.500q2 2.500 0 5M12.500 3.500q4 4.500 0 9M14.700 2q5 6 0 12" fill="none" stroke="#222" stroke-width="1.200" /></symbol>
      <symbol id="battery" viewBox="0 0 18 16"><rect x="2" y="4.500" width="13" height="8.500" rx="2" fill="none" stroke="#222" stroke-width="1.300" /><path d="M5 6.500h8.500v5H3.500V9zM16 7v3.500h1.500V7z" fill="#222" /><path d="M4 0 1 5h2L2 8l4-5H4z" fill="#111" /></symbol>
      <symbol id="bluebell" viewBox="0 0 14 18"><path d="M7 1q5 0 5 6 0 4 2 6H0q2-2 2-6 0-6 5-6M5 14.500h4a2 2 0 0 1-4 0" fill="#11479b" /></symbol>
    </svg>

    <header class="strip">
      <button class="tablist" aria-label="Search tabs"><svg class="s12"><use href="#chev" /></svg></button>
      <div v-for="(tab, i) in browserTabs" :key="i" class="tab" :class="{ on: tab.active }">
        <svg v-if="tab.icon === 'onshape-green'" class="s16 green"><use href="#onshape-mark" /></svg>
        <span v-else-if="tab.icon === 'tac'" class="tac">TAC</span>
        <svg v-else class="s16"><use :href="'#' + tab.icon" /></svg>
        <span class="tab-title">{{ tab.title }}</span>
        <button class="tab-close" aria-label="Close tab"><svg class="s12"><use href="#x" /></svg></button>
      </div>
      <button class="newtab" aria-label="New tab"><svg class="s12" viewBox="0 0 12 12"><path d="M6 1v10M1 6h10" stroke="currentColor" stroke-width="1.500" /></svg></button>
      <div class="winctl">
        <button aria-label="Minimize"><svg class="s12" viewBox="0 0 12 12"><path d="M1 6h10" stroke="#111" stroke-width="1.200" /></svg></button>
        <button aria-label="Restore"><svg class="s12" viewBox="0 0 12 12"><path d="M3.500 1.500H9a2 2 0 0 1 2 2V8M1 5.500q0-2 2-2h3.500q2 0 2 2V9q0 2-2 2H3q-2 0-2-2z" fill="none" stroke="#111" stroke-width="1.300" /></svg></button>
        <button aria-label="Close"><svg class="s12" viewBox="0 0 12 12"><path d="M1 1l10 10M11 1 1 11" stroke="#111" stroke-width="1.300" /></svg></button>
      </div>
    </header>

    <div class="address">
      <button class="nav" aria-label="Back"><svg class="s16"><use href="#back" /></svg></button>
      <button class="nav faint" aria-label="Forward"><svg class="s16"><use href="#forward" /></svg></button>
      <button class="nav" aria-label="Reload"><svg class="s16"><use href="#reload" /></svg></button>
      <div class="omni">
        <button class="site" aria-label="Site settings"><svg class="s16"><use href="#tune" /></svg></button>
        <input v-model="url" class="url" aria-label="Address">
        <button class="omni-key" aria-label="Passwords"><svg class="s20"><use href="#key" /></svg></button>
        <button class="omni-star" aria-label="Bookmark"><svg class="s16"><use href="#star" /></svg></button>
      </div>
      <button class="ext" aria-label="Screen recorder"><svg class="s16"><use href="#recorder-small" /></svg></button>
      <button class="ext" aria-label="Extension"><svg class="s16"><use href="#blackext" /></svg></button>
      <button class="ext" aria-label="Extensions"><svg class="s18"><use href="#puzzle" /></svg></button>
      <span class="ext-sep"></span>
      <button class="ext" aria-label="Media"><svg class="s16"><use href="#playlist" /></svg></button>
      <button class="ext" aria-label="Profile"><svg class="s18"><use href="#ghost" /></svg></button>
      <button class="update">New Chrome available<svg class="dots" viewBox="0 0 4 16"><circle cx="2" cy="3" r="1.500" /><circle cx="2" cy="8" r="1.500" /><circle cx="2" cy="13" r="1.500" /></svg></button>
    </div>

    <div class="docbar">
      <svg class="logo"><use href="#onshape-mark" /></svg>
      <span class="brand">onshape</span>
      <button class="burger" aria-label="Menu"><svg class="s18" viewBox="0 0 18 18"><path d="M0 3h18M0 9h18M0 15h18" stroke="#fff" stroke-width="2.500" /></svg></button>
      <h1>Engineering Practice Model</h1>
      <span class="branch">Main</span>
      <button class="plain link" aria-label="Copy link"><svg class="s16"><use href="#link" /></svg></button>
      <button class="plain" aria-label="Learning center"><svg class="s18"><use href="#gradcap" /></svg></button>
      <div class="doc-right">
        <button class="gray" aria-label="Notifications"><svg class="s20"><use href="#bell" /></svg><b class="count">8</b></button>
        <button class="gray" aria-label="Tasks"><svg class="s20"><use href="#checklist" /></svg></button>
        <button class="gray" aria-label="App store"><svg class="s20"><use href="#appgrid" /></svg></button>
        <button class="gray" aria-label="AI advisor"><svg class="s20"><use href="#head" /></svg></button>
        <button class="share">Share</button>
        <button class="help" aria-label="Help"><svg class="s20"><use href="#question" /></svg><svg class="caret"><use href="#caret" /></svg></button>
        <button class="user"><svg class="s20"><use href="#avatar" /></svg><span>Matt Battaglia</span><svg class="caret"><use href="#caret" /></svg></button>
      </div>
    </div>

    <div class="app">
      <nav class="rail">
        <button class="first" aria-label="Feature list"><svg class="s20"><use href="#tree" /></svg></button>
        <button aria-label="Versions"><svg class="s20"><use href="#addnode" /></svg></button>
        <button aria-label="Comments"><svg class="s20"><use href="#comment" /></svg></button>
        <button aria-label="Performance"><svg class="s20"><use href="#speed" /></svg></button>
        <hr>
        <button aria-label="Task list"><svg class="s20"><use href="#checklist" /></svg></button>
        <button class="last" aria-label="Tab manager"><svg class="s20"><use href="#tabsearch" /></svg></button>
      </nav>

      <div class="work">
        <div class="tools">
          <button class="tool" aria-label="Undo"><svg class="s18"><use href="#undo" /></svg></button>
          <button class="tool" aria-label="Redo"><svg class="s18"><use href="#redo" /></svg></button>
          <span class="tsep"></span>
          <button class="sketch"><svg class="s20"><use href="#sketch" /></svg>Sketch</button>
          <span class="tsep"></span>
          <template v-for="(tool, i) in tools" :key="i">
            <span v-if="tool.kind === 'sep'" class="tsep"></span>
            <button v-else-if="tool.kind === 'menu'" class="tmenu" :aria-label="tool.label"><svg class="s12"><use href="#chev" /></svg></button>
            <button v-else class="tool" :aria-label="tool.label"><svg :class="tool.icon === 'addtool' || tool.icon === 'boolean' ? 's22' : 's18'"><use :href="'#' + tool.icon" /></svg></button>
          </template>
          <button class="search-tools">Search tools...<span class="keys"><kbd>alt/⌥</kbd><kbd>c</kbd></span></button>
        </div>

        <main class="stage">
          <svg class="model" viewBox="40 164 1240 478" role="img" aria-label="Bracket model">
            <defs>
              <linearGradient id="cyl" gradientUnits="userSpaceOnUse" x1="690" y1="224" x2="750" y2="363">
                <stop offset="0" stop-color="#147b6e" /><stop offset=".3" stop-color="#168a7b" /><stop offset=".42" stop-color="#169584" /><stop offset=".52" stop-color="#34bca5" /><stop offset=".6" stop-color="#5ff3d8" /><stop offset=".65" stop-color="#65ffe2" /><stop offset=".7" stop-color="#4bdcc3" /><stop offset=".79" stop-color="#17907f" /><stop offset=".9" stop-color="#0e7a6d" /><stop offset="1" stop-color="#0e766a" />
              </linearGradient>
              <linearGradient id="bore" gradientUnits="userSpaceOnUse" x1="670" y1="286" x2="704" y2="373" gradientTransform="rotate(-67.700 687 329)">
                <stop offset="0" stop-color="#0e6e62" /><stop offset=".2" stop-color="#14816f" /><stop offset=".34" stop-color="#2db39d" /><stop offset=".44" stop-color="#62f8de" /><stop offset=".52" stop-color="#68ffe5" /><stop offset=".66" stop-color="#22a591" /><stop offset="1" stop-color="#12907d" />
              </linearGradient>
              <linearGradient id="round" gradientUnits="userSpaceOnUse" x1="538" y1="475" x2="499" y2="532">
                <stop offset="0" stop-color="#168576" /><stop offset=".35" stop-color="#107062" /><stop offset=".75" stop-color="#0b5046" /><stop offset="1" stop-color="#0e4f46" />
              </linearGradient>
              <linearGradient id="well" x1="0" y1="0" x2="1" y2="0">
                <stop offset="0" stop-color="#12685c" /><stop offset=".6" stop-color="#0c4c43" /><stop offset="1" stop-color="#126459" />
              </linearGradient>
            </defs>
            <g stroke="#062b28" stroke-width="1.500" stroke-linejoin="round">
              <path d="M483 435 619 377 812 295 873 268Q891 261 903 271L1004 345 980 349 590 514z" fill="#148374" />
              <path d="M873 268 977 348M483 435l107 79" fill="none" />
              <path d="M446 492C443 465 460 444 483 435L590 514C568 522 553 546 554 570z" fill="url(#round)" />
              <path d="M446 492 554 570 556 611 447 531z" fill="#105a4f" />
              <path d="M656 239 730 208C758 200 783 239 792 253 811 286 817 310 820 337L742 368 690 300z" fill="url(#cyl)" />
              <path d="M742 368 820 337 823 394 843 406 727 456 745 429z" fill="#126b60" />
              <path d="M823 392 843 406" fill="none" />
              <path d="M637 349 633 275C632 252 640 240 656 239 684 240 706 268 720 291 735 319 741 344 742 368L745 429z" fill="#0b4b42" />
              <path d="M637 349 745 429 727 456 619 377z" fill="#0f5e53" />
              <ellipse cx="687" cy="329" rx="47.500" ry="22.300" transform="rotate(67.700 687 329)" fill="url(#bore)" />
              <ellipse cx="614.500" cy="442" rx="24" ry="13.300" fill="url(#well)" />
              <ellipse cx="848.500" cy="342" rx="24" ry="13.300" fill="url(#well)" />
            </g>
            <path d="M556 611 554 570C553 546 568 522 590 514L980 348C1004 339 1021 349 1023 376L1025 412z" fill="#116f63" />
            <path d="M447 531 917 332 1025 412 556 611z" fill="#7c7c7c" fill-opacity=".12" />
            <path d="M447 531 917 332 1025 412" fill="none" stroke="#6f9c95" stroke-width="1.300" stroke-dasharray="13 12" />
            <path d="M447 531 556 611" stroke="#8b9995" stroke-width="1.400" />
            <path d="M633 540 943 407 946 445 635 578z" fill="#5f6060" />
            <path d="M915 421 943 408 946 445z" fill="#1c5f55" stroke="#123a36" />
            <g fill="none" stroke-linejoin="round">
              <path d="M556 611 554 570C553 546 568 522 590 514L980 348C1004 339 1021 349 1023 376L1025 412z" stroke="#efcf91" stroke-width="2.200" />
              <path d="M633 540 944 407 946 446 635 578z" stroke="#e6b87c" stroke-width="4" />
              <path d="M634 540 944 407 946 445" stroke="#a8906a" stroke-width="1" />
              <path d="M635 578 946 445" stroke="#fdcc8c" stroke-width="3.400" />
            </g>
            <g fill="#b5bdbb"><circle cx="447.500" cy="531.500" r="2.200" /><circle cx="917" cy="332" r="2.200" /><circle cx="1025" cy="412" r="2" /><circle cx="556.500" cy="611.500" r="2" /></g>
            <circle cx="736.500" cy="472" r="2.500" fill="#1a5b54" stroke="#a4b5b3" stroke-width="1.200" />
          </svg>

          <aside class="panel">
            <div class="filter">
              <svg class="s18"><use href="#funnel" /></svg>
              <input v-model="filter" placeholder="Filter by name or type" aria-label="Filter by name or type">
            </div>
            <div class="feat-head">
              <h2>Features (16)</h2>
              <button aria-label="Add folder"><svg class="s20"><use href="#addfolder" /></svg></button>
              <button aria-label="Pause regeneration"><svg class="s16" viewBox="0 0 16 16"><path d="M4.500 1v14M11.500 1v14" stroke="#eee" stroke-width="4" /></svg></button>
              <button class="hot" aria-label="Show regeneration times"><svg class="s20"><use href="#stopwatch" /></svg></button>
              <span class="tip" role="tooltip">Show regeneration times</span>
              <svg class="pointer" viewBox="0 0 18 22"><path d="M4 2q1.500-2 3 0v6l8 2q2 1 2 3-1 7-3 8H8L1 14q-1-2 1-2.500l2.500 1.500z" fill="#fff" stroke="#222" stroke-width="1" /></svg>
            </div>
            <div class="list">
              <ul>
                <li v-for="f in features" :key="f.name" :class="{ dim: f.dim }"><svg class="s16"><use :href="'#' + f.icon" /></svg>{{ f.name }}</li>
                <li class="rollback"></li>
              </ul>
              <div class="bar"><svg class="caret up"><use href="#caret" /></svg><span class="thumb"></span><svg class="caret"><use href="#caret" /></svg></div>
            </div>
            <div class="parts">
              <button class="parts-head"><svg class="s12"><use href="#chev" /></svg>Parts (1)</button>
              <div class="part"><svg class="s16"><use href="#part" /></svg>Part 1</div>
            </div>
          </aside>
          <button class="fold" aria-label="Toggle feature list"><svg class="s20"><use href="#listtoggle" /></svg></button>

          <svg class="viewcube" viewBox="1110 174 160 158" role="img" aria-label="View cube">
            <g fill="#939393">
              <path d="M1183 188h14l-7-10zM1183 318h14l-7 10zM1125 246v15l-10-7zM1255 246v15l10-7z" />
              <path d="M1169 186q-18 6-25 17l-6-3-1 12 12-2-3-3q8-10 24-16zM1212 186q18 6 24 17l7-3v12l-12-2 3-3q-8-10-23-16z" />
            </g>
            <path d="M1150 232q0-6 6-9l26-11q6-2 12 0l28 13q5 3 6 8l3 41q0 5-6 8l-33 16q-6 2-11-1l-25-18q-4-3-5-8z" fill="#878787" />
            <g fill="#2c2e2e">
              <path d="M1164 227q-2-2 2-4l20-8q5-2 9 0l17 8q5 3 1 6l-19 10q-5 2-10 0z" />
              <path d="M1153 244q0-6 5-4l15 9q4 3 4 7l1 27q0 6-5 3l-14-9q-4-3-5-9z" />
              <path d="M1190 261q0-6 5-8l22-10q7-2 7 5l2 22q0 5-6 8l-23 10q-6 2-6-4z" />
              <circle cx="1183" cy="251" r="7" />
              <ellipse cx="1221" cy="234" rx="4" ry="7" transform="rotate(-25 1221 234)" />
              <ellipse cx="1156" cy="231" rx="2.500" ry="5.500" transform="rotate(30 1156 231)" />
              <ellipse cx="1185" cy="291" rx="7" ry="2.600" />
              <path d="M1194 210l3 0 2 5-3-1zM1225 275l6-3v4l-5 3z" />
            </g>
            <path d="M1147 228l3 47" stroke="#5fa7b2" stroke-width="1.500" />
            <path d="M1150 276l33 25" stroke="#c06f87" stroke-width="1.500" />
            <path d="M1150 276 1202 253" stroke="#6a8a43" stroke-width=".8" />
            <g font-family="Roboto, sans-serif" font-weight="700" fill="#e5e5e5" text-anchor="middle">
              <text x="1187" y="231" font-size="9" transform="rotate(55 1187 228)">Top</text>
              <text x="1165" y="266" font-size="8" transform="rotate(25 1165 263)">Front</text>
              <text x="1207" y="267" font-size="11" transform="rotate(-15 1207 264)">Right</text>
              <text x="1145" y="223" font-size="12" fill="#67b9c9">Z</text>
              <text x="1188" y="310" font-size="12" fill="#d87892">X</text>
              <text x="1206" y="255" font-size="9" fill="#62624c">Y</text>
            </g>
          </svg>

          <button class="shade" aria-label="View style"><svg class="s16"><use href="#cube" /></svg></button>
          <div class="side">
            <button v-for="s in sidePanels" :key="s.icon" :aria-label="s.label"><svg class="s20"><use :href="'#' + s.icon" /></svg></button>
          </div>
          <div class="measure">
            <button aria-label="Measure"><svg class="s18"><use href="#tape" /></svg></button>
            <button aria-label="Angle"><svg class="s20"><use href="#protractor" /></svg></button>
            <button aria-label="Mass properties"><svg class="s16"><use href="#scales" /></svg></button>
          </div>
        </main>

        <footer class="doctabs">
          <button class="add" aria-label="Add tab"><svg class="s16" viewBox="0 0 16 16"><path d="M8 0v16M0 8h16" stroke="#ccc" stroke-width="2.500" /></svg></button>
          <button v-for="(d, i) in docTabs" :key="d.name" class="doctab" :class="{ on: i === activeDoc }" @click="activeDoc = i"><svg class="s18"><use :href="'#' + d.icon" /></svg>{{ d.name }}</button>
        </footer>
      </div>
    </div>

    <div class="taskbar">
      <button class="weather"><span class="sun"><svg class="sunpic"><use href="#weather" /></svg><b>4</b></span><span class="wtext">36°F<small>Sunny</small></span></button>
      <div class="center">
        <button class="start" aria-label="Start"><svg class="s24"><use href="#windows" /></svg></button>
        <label class="wsearch"><svg class="s18"><use href="#searchring" /></svg><input v-model="query" placeholder="Search" aria-label="Search Windows"><svg class="school"><use href="#school" /></svg></label>
        <button v-for="a in apps" :key="a.icon" class="appbtn" :class="{ active: a.active, running: a.running }" :aria-label="a.label"><svg class="s26"><use :href="'#' + a.icon" /></svg></button>
      </div>
      <div class="tray">
        <button class="up" aria-label="Hidden icons"><svg class="s12"><use href="#chev" /></svg></button>
        <button aria-label="OneDrive"><svg class="s18"><use href="#cloud" /></svg></button>
        <button aria-label="Microphone"><svg class="s18"><use href="#mic" /></svg></button>
        <button class="quick" aria-label="Quick settings"><svg class="s18"><use href="#monitor" /></svg><svg class="s18"><use href="#volume" /></svg><svg class="s18"><use href="#battery" /></svg></button>
        <button class="clock"><span>8:45 AM</span><span>3/12/2025</span></button>
        <button class="nbell" aria-label="Notifications"><svg class="s18"><use href="#bluebell" /></svg></button>
      </div>
    </div>
  </div>
</template>

<style>
body { margin: 0; }
</style>

<style scoped>
.screen { display: flex; flex-direction: column; height: 100vh; min-height: 640px; overflow: hidden; font-family: "Open Sans", "Noto Sans", sans-serif; font-size: 13px; color: #474d57; }
.defs { position: absolute; width: 0; height: 0; }
button { font: inherit; color: inherit; background: none; border: 0; padding: 0; margin: 0; display: flex; align-items: center; justify-content: center; flex: none; white-space: nowrap; }
input { font: inherit; color: inherit; background: none; border: 0; padding: 0; min-width: 0; outline: 0; }
svg { flex: none; display: block; }
.s12 { width: 12px; height: 12px; }
.s16 { width: 16px; height: 16px; }
.s18 { width: 18px; height: 18px; }
.s20 { width: 20px; height: 20px; }
.s22 { width: 22px; height: 22px; }
.s24 { width: 24px; height: 24px; }
.s26 { width: 26px; height: 26px; }
.caret { width: 8px; height: 6px; }

.strip { display: flex; align-items: center; height: 40px; flex: none; background: #d3e3fa; }
.tablist { width: 28px; height: 28px; margin: 0 2px 0 6px; border-radius: 9px; background: #eaf2fd; color: #1d2430; }
.tab { position: relative; flex: 0 1 146px; box-sizing: border-box; display: flex; align-items: center; height: 34px; padding-left: 12px; min-width: 0; }
.tab:not(.on)::after { content: ""; position: absolute; right: 0; width: 1px; height: 16px; background: #a9c3ee; }
.tab:nth-last-child(4)::after { display: none; }
.tac { width: 16px; height: 16px; flex: none; border-radius: 1px; background: #0b4182; color: #fff; font: 700 7px/16px "Liberation Sans", Arial, sans-serif; text-align: center; }
.tab-title { flex: 0 1 78px; min-width: 0; margin-left: 8px; overflow: hidden; white-space: nowrap; font-size: 12px; mask-image: linear-gradient(90deg, #000 58px, rgba(0, 0, 0, .15) 78px); }
.tab-close { margin-left: 8px; color: #222b38; }
.tab.on { align-self: flex-end; flex-basis: 139px; margin-left: 4px; padding: 0 0 4px 8px; background: #fff; border-radius: 9px 9px 0 0; color: #39404a; }
.green { color: #55a646; }
.newtab { width: 28px; height: 28px; margin-left: 6px; }
.winctl { margin-left: auto; display: flex; }
.winctl button { width: 46px; height: 40px; }

.address { display: flex; align-items: center; height: 47px; flex: none; box-sizing: border-box; padding: 0 0 2px 4px; background: #fff; color: #333; }
.nav { width: 36px; height: 34px; }
.faint { color: #a4a7ac; }
.omni { flex: 1 1 0; min-width: 0; height: 34px; margin: 0 10px 0 8px; border-radius: 17px; background: #ebf0f8; display: flex; align-items: center; }
.site { width: 24px; height: 24px; margin: 0 8px 0 5px; border-radius: 12px; background: #fff; }
.url { flex: 1; font-size: 13px; color: #474b52; }
.omni-key { width: 24px; height: 32px; }
.omni-star { width: 32px; height: 32px; margin: 0 7px 0 4px; }
.ext { width: 36px; height: 34px; }
.ext-sep { width: 1px; height: 16px; margin: 0 8px; background: #c5daf5; }
.update { height: 34px; margin: 0 7px 0 4px; padding: 0 11px; border-radius: 17px; background: #d3e3fa; font-size: 12px; color: #33435c; gap: 7px; }
.dots { width: 4px; height: 16px; }

.docbar, .app { font-family: Roboto, "Noto Sans", sans-serif; font-weight: 500; color: #f0f0f0; }
.docbar { display: flex; align-items: center; height: 40px; flex: none; padding-left: 5px; background: #2b2b2b; }
.logo { width: 20px; height: 22px; }
.brand { font-family: Inter, sans-serif; font-weight: 300; font-size: 17px; width: 68px; margin: 0 14px 0 6px; }
.burger { width: 18px; margin-right: 10px; }
h1 { margin: 2px 0 0; font-size: 23px; font-weight: 700; color: #fff; white-space: nowrap; }
.branch { margin: 5px 8px 0 6px; font-size: 16px; font-weight: 400; color: #a5a5a5; }
.plain { height: 30px; margin-top: 2px; }
.link { margin-right: 33px; }
.doc-right { display: flex; align-items: center; margin-left: auto; height: 40px; }
.gray { position: relative; width: 32px; height: 40px; padding-top: 4px; color: #a3a3a3; }
.count { position: absolute; left: 17px; top: 6px; width: 15px; height: 16px; line-height: 16px; border-radius: 2px; background: #1a54b8; color: #fff; font-size: 11px; }
.share { width: 59px; height: 32px; margin: 0 9px 0 4px; border-radius: 4px; background: #1650b4; font-size: 15px; color: #fff; }
.help { gap: 7px; margin: 3px 15px 0 0; }
.user { gap: 6px; padding: 2px 6px 0 0; font-size: 14px; color: #fff; }

.app { display: flex; flex: 1; min-height: 0; background: #333; }
.rail { width: 39px; flex: none; border-right: 1px solid #454545; background: #2b2b2b; display: flex; flex-direction: column; align-items: center; }
.rail button { width: 39px; height: 35px; }
.rail .first { height: 36px; background: #333; }
.rail hr { width: 100%; height: 1px; margin: 0; border: 0; background: #4a4a4a; }
.rail .last { margin-top: auto; height: 26px; }
.work { flex: 1; min-width: 0; display: flex; flex-direction: column; }
.tools { display: flex; align-items: center; height: 37px; flex: none; font-size: 14px; background: #333; }
.tool { width: 34px; height: 34px; }
.tmenu { width: 18px; height: 34px; justify-content: flex-start; padding-left: 1px; }
.tsep { width: 1px; height: 26px; margin: 0 2px 0 1px; background: #505050; flex: none; }
.sketch { width: 86px; height: 34px; gap: 2px; }
.search-tools { width: 159px; height: 32px; margin-left: 11px; border-radius: 2px; background: #505050; color: #f5f5f5; gap: 3px; }
.keys { display: flex; }
kbd { font-family: inherit; font-size: 11px; font-weight: 400; line-height: 16px; padding: 0 4px; border: 1px solid #b5b5b5; border-bottom-width: 2px; border-radius: 2px; color: #ddd; }

.stage { position: relative; flex: 1; min-height: 0; display: flex; align-items: flex-start; background: #333; }
.model { position: absolute; inset: 0; width: 100%; height: 100%; }
.panel { position: relative; z-index: 2; width: 205px; height: 100%; box-sizing: content-box; display: flex; flex-direction: column; border-right: 1px solid #4d4d4d; background: #333; box-shadow: inset 0 -1px #4d4d4d, inset 0 1px #484848; }
.filter { display: flex; align-items: center; height: 38px; flex: none; padding: 4px 8px 0 9px; gap: 12px; }
.filter input { flex: 1; height: 27px; padding-left: 5px; border: 1px solid #808080; border-radius: 3px; font-weight: 400; font-style: italic; font-size: 13px; }
.filter input::placeholder { color: #a3a3a3; opacity: 1; }
.feat-head { position: relative; display: flex; align-items: center; height: 30px; flex: none; padding-left: 4px; margin-top: -5px; }
h2 { margin: 0 auto 0 0; font-size: 13px; font-weight: 700; }
.feat-head button { width: 30px; height: 30px; }
.feat-head .hot { background: #5c5c5c; margin-right: 15px; }
.tip { position: absolute; left: 193px; top: 3px; height: 26px; line-height: 26px; padding: 0 4px; background: #435059; color: #c9d1d5; font-size: 12px; font-weight: 700; white-space: nowrap; box-shadow: 0 0 2px #222; }
.pointer { position: absolute; left: 173px; top: 23px; width: 18px; height: 22px; z-index: 2; }
.list { position: relative; flex: 0 1 243px; min-height: 0; width: 200px; display: flex; border-bottom: 1px solid #5a5a5a; overflow: hidden; }
ul { flex: 1; margin: -17px 0 0; padding: 0; list-style: none; }
li { display: flex; align-items: center; gap: 4px; height: 26px; padding-left: 6px; font-size: 13px; }
li.dim { color: #929292; }
li.rollback { width: 174px; height: 7px; margin: 10px 0 0 5px; padding: 0; background: #b3b3b3; }
.bar { width: 16px; margin-right: 1px; background: #3e3e3e; display: flex; flex-direction: column; align-items: center; justify-content: flex-end; color: #858585; }
.bar .up { margin: 6px 0 auto; transform: rotate(180deg); color: #eee; }
.thumb { width: 14px; height: 109px; background: #656565; }
.bar .caret:last-child { margin: 5px 0 6px; }
.parts { font-size: 13px; }
.parts-head { height: 26px; padding-left: 4px; gap: 7px; }
.parts-head svg { color: #aaa; }
.part { display: flex; align-items: center; gap: 4px; height: 26px; padding-left: 25px; }
.fold { position: relative; align-self: flex-start; width: 32px; height: 34px; margin-top: 213px; border: 1px solid #777; border-left: 0; }
.viewcube { position: absolute; right: 10px; top: 10px; width: 160px; height: 158px; }
.shade { position: absolute; right: 37px; top: 147px; }
.side { position: absolute; right: 0; top: 147px; width: 31px; border: 1px solid #777; border-right: 0; background: #2b2b2b; }
.side button { width: 31px; height: 33px; }
.side button + button { border-top: 1px solid #777; }
.measure { position: absolute; right: 12px; bottom: 4px; display: flex; align-items: center; gap: 16px; }
.doctabs { height: 30px; flex: none; display: flex; background: #555; gap: 2px; }
.add { width: 37px; height: 30px; padding-right: 4px; box-sizing: border-box; }
.doctab { flex: 0 1 200px; height: 28px; box-sizing: border-box; justify-content: flex-start; padding-left: 12px; gap: 3px; border-radius: 0 0 3px 3px; background: #1d1d1d; color: #d8d8d8; font-size: 14px; }
.doctab.on { background: #333; color: #eee; height: 29px; border-bottom: 2px solid #8ec5ea; }

.taskbar { position: relative; display: flex; align-items: center; height: 48px; flex: none; background: linear-gradient(90deg, #f1dfc2 0%, #f2e1c4 24%, #dcebd0 28.500%, #f3e8bd 32%, #f6e5bd 45%, #f5e4c2 60%, #dde3f0 65%, #d9e3f3 100%); color: #333; font-size: 12px; }
.weather { padding-left: 19px; gap: 6px; margin-right: 242px; }
.sun { position: relative; width: 26px; height: 30px; }
.sunpic { width: 26px; height: 28px; }
.sun b { position: absolute; right: -1px; top: -1px; width: 16px; height: 16px; line-height: 16px; border-radius: 8px; background: #bd3324; color: #fff; font-size: 11px; }
.wtext { display: flex; flex-direction: column; text-align: left; line-height: 16px; }
.wtext small { font-size: 12px; color: #716a5c; }
.center { display: flex; align-items: center; }
.start { margin-right: 14px; }
.wsearch { width: 215px; height: 30px; box-sizing: border-box; display: flex; align-items: center; padding: 0 0 0 10px; border-radius: 15px; background: #fcf9e8; border: 1px solid #e5dcc2; margin-right: 5px; }
.wsearch input { flex: 1; margin-left: 8px; font-size: 13px; }
.wsearch input::placeholder { color: #6b6960; opacity: 1; }
.school { width: 46px; height: 26px; margin-right: 2px; }
.appbtn { position: relative; width: 36px; height: 40px; margin: 0 4px; border-radius: 4px; }
.appbtn.active { background: #f3f6fb; }
.running::after, .active::after { content: ""; position: absolute; bottom: 1px; width: 6px; height: 3px; border-radius: 2px; background: #7b7b7b; }
.active::after { width: 16px; background: #1470c4; }
.tray { margin-left: auto; display: flex; align-items: center; gap: 8px; padding-right: 19px; }
.up { transform: rotate(180deg); color: #222; margin-right: 10px; }
.tray button:nth-child(2) { margin-right: 6px; }
.tray button:nth-child(3) { margin-right: 5px; }
.quick { gap: 6px; }
.clock { flex-direction: column; align-items: flex-end; line-height: 16px; margin-left: 5px; }
</style>
